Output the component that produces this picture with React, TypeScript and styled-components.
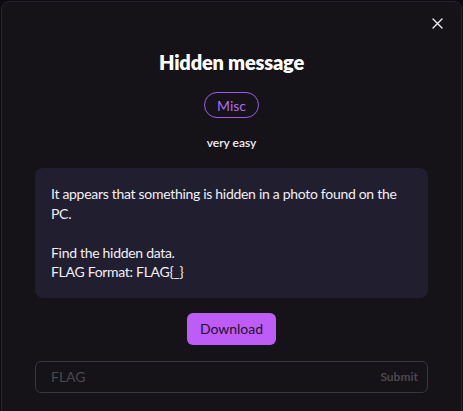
import React from "react";
import styled, { createGlobalStyle } from "styled-components";

const Global = createGlobalStyle`
  html, body { margin: 0; padding: 0; background: #0d0b11; }
  body { font-family: Lato, "Noto Sans", sans-serif; color: #f2f0f5; }
  * { box-sizing: border-box; }
`;

const Page = styled.div`
  width: 463px;
  height: 411px;
  padding: 1px 1px 0 1px;
  overflow: hidden;
`;

const Modal = styled.div`
  position: relative;
  height: 420px;
  background: #151318;
  border: 1px solid #25232c;
  border-radius: 8px;
  padding: 46px 33px 0 33px;
  display: flex;
  flex-direction: column;
  align-items: center;
`;

const Close = styled.button`
  position: absolute;
  top: 14px;
  right: 17px;
  width: 14px;
  height: 14px;
  padding: 0;
  border: 0;
  background: none;
  color: #f0eef3;
  display: flex;
  align-items: center;
  justify-content: center;
`;

const Title = styled.h2`
  margin: 0;
  font-size: 20px;
  line-height: 28px;
  font-weight: 800;
  color: #ffffff;
  letter-spacing: -0.2px;
`;

const Pill = styled.span`
  margin-top: 16px;
  height: 26px;
  padding: 0 12px;
  border: 1px solid #a259e6;
  border-radius: 13px;
  color: #b06cf0;
  font-size: 14px;
  display: flex;
  align-items: center;
`;

const Difficulty = styled.div`
  margin-top: 17px;
  font-size: 12px;
  line-height: 16px;
  font-weight: 600;
  color: #f2f0f5;
`;

const Description = styled.div`
  margin-top: 17px;
  width: 100%;
  background: #211e30;
  border-radius: 8px;
  padding: 16px 30px 16px 16px;
  font-size: 14px;
  line-height: 19.5px;
  font-weight: 400;
  letter-spacing: -0.3px;
  color: #f1eff4;
  white-space: pre-line;
`;

const DownloadButton = styled.button`
  margin-top: 15px;
  height: 32px;
  padding: 0 13px;
  border: 0;
  border-radius: 6px;
  background: #be5cf8;
  color: #1c1428;
  font-family: Lato, "Noto Sans", sans-serif;
  font-size: 14px;
  font-weight: 400;
`;

const FlagForm = styled.div`
  margin-top: 16px;
  width: 100%;
  height: 32px;
  border: 1px solid #38363f;
  border-radius: 6px;
  display: flex;
  align-items: center;
  padding: 0 9px 0 13px;
`;

const FlagInput = styled.input`
  flex: 1;
  min-width: 0;
  background: transparent;
  border: 0;
  outline: none;
  color: #f0eef3;
  font-family: Lato, "Noto Sans", sans-serif;
  font-size: 14px;
  &::placeholder { color: #4a4850; }
`;

const SubmitButton = styled.button`
  border: 0;
  background: none;
  padding: 0;
  color: #4a4850;
  font-family: Lato, "Noto Sans", sans-serif;
  font-size: 12px;
  font-weight: 700;
`;

export default function App() {
  return (
    <Page>
      <Global />
      <Modal>
        <Close aria-label="Close">
          <svg width="11" height="11" viewBox="0 0 11 11" fill="none">
            <path d="M1 1L10 10M10 1L1 10" stroke="currentColor" strokeWidth="1.4" strokeLinecap="round" />
          </svg>
        </Close>
        <Title>Hidden message</Title>
        <Pill>Misc</Pill>
        <Difficulty>very easy</Difficulty>
        <Description>
          {"It appears that something is hidden in a photo found on the PC.\n\nFind the hidden data.\nFLAG Format: FLAG{_}"}
        </Description>
        <DownloadButton>Download</DownloadButton>
        <FlagForm>
          <FlagInput placeholder="FLAG" />
          <SubmitButton>Submit</SubmitButton>
        </FlagForm>
      </Modal>
    </Page>
  );
}
